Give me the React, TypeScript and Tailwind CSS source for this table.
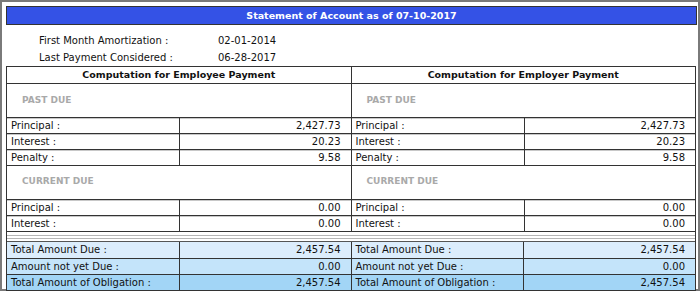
import React from "react";

type Row = { label: string; value: string };

const pastDue: Row[] = [
  { label: "Principal :", value: "2,427.73" },
  { label: "Interest :", value: "20.23" },
  { label: "Penalty :", value: "9.58" },
];

const currentDue: Row[] = [
  { label: "Principal :", value: "0.00" },
  { label: "Interest :", value: "0.00" },
];

const totals = [
  { label: "Total Amount Due :", value: "2,457.54", bg: "bg-[#dcedfc]" },
  { label: "Amount not yet Due :", value: "0.00", bg: "bg-[#c4e4fa]" },
  { label: "Total Amount of Obligation :", value: "2,457.54", bg: "bg-[#a2d5f6]" },
];

function Rows({ rows }: { rows: Row[] }) {
  return (
    <div className="border-t border-[#333]">
      {rows.map((r, i) => (
        <div key={i} className="flex h-[16px] border-b border-[#333] shadow-[inset_0_1px_0_#c8c8c8]">
          <div className="w-[173px] shrink-0 border-r border-[#333] pl-[4px] leading-[16px]">{r.label}</div>
          <div className="flex-1 pr-[10px] text-right leading-[16px]">{r.value}</div>
        </div>
      ))}
    </div>
  );
}

function Panel({ title, last }: { title: string; last?: boolean }) {
  return (
    <div className={`flex-1 flex flex-col ${last ? "" : "border-r border-[#333]"}`}>
      <div className="h-[17px] border-b border-[#333] text-center font-bold text-[9.5px] leading-[16px]">{title}</div>
      <div className="h-[33px] pl-[15px] pt-[11px] text-[9px] font-bold text-[#a9a9a9] leading-[11px]">PAST DUE</div>
      <Rows rows={pastDue} />
      <div className="h-[33px] pl-[15px] pt-[10px] text-[9px] font-bold text-[#a9a9a9] leading-[11px]">CURRENT DUE</div>
      <Rows rows={currentDue} />
    </div>
  );
}

export default function App() {
  return (
    <div
      className="w-[700px] h-[291px] bg-white text-[10px] text-[#111] overflow-hidden"
      style={{ fontFamily: '"DejaVu Sans", Verdana, sans-serif' }}
    >
      <div className="h-full border-2 border-[#7a7a7a] pt-[4px] pl-[4px] pr-[1px]">
        {/* header */}
        <div className="h-[19px] border border-[#333] bg-[#3452e6] text-white text-center font-bold text-[9.5px] leading-[17px]">
          Statement of Account as of 07-10-2017
        </div>

        {/* info */}
        <div className="pt-[7px] pl-[33px]">
          <div className="flex h-[17px] leading-[17px]">
            <div className="w-[179px]">First Month Amortization :</div>
            <div>02-01-2014</div>
          </div>
          <div className="flex h-[17px] leading-[17px]">
            <div className="w-[179px]">Last Payment Considered :</div>
            <div>06-28-2017</div>
          </div>
        </div>

        {/* computation */}
        <div className="mr-[1px] border border-[#333]">
          <div className="flex">
            <Panel title="Computation for Employee Payment" />
            <Panel title="Computation for Employer Payment" last />
          </div>
          <div className="h-[9px] flex flex-col justify-center gap-[2px]">
            <div className="h-px bg-[#b5b5b5]" />
            <div className="h-px bg-[#b5b5b5]" />
          </div>
          <div className="border-t border-[#555]">
            {totals.map((t, i) => (
              <div key={i} className={`flex h-[16px] ${t.bg} ${i > 0 ? "border-t border-[#333]" : ""}`}>
                <div className="flex-1 flex border-r border-[#333]">
                  <div className="w-[173px] shrink-0 border-r border-[#333] pl-[4px] leading-[16px]">{t.label}</div>
                  <div className="flex-1 pr-[10px] text-right leading-[16px]">{t.value}</div>
                </div>
                <div className="flex-1 flex">
                  <div className="w-[172px] shrink-0 border-r border-[#333] pl-[4px] leading-[16px]">{t.label}</div>
                  <div className="flex-1 pr-[10px] text-right leading-[16px]">{t.value}</div>
                </div>
              </div>
            ))}
          </div>
        </div>
      </div>
    </div>
  );
}
